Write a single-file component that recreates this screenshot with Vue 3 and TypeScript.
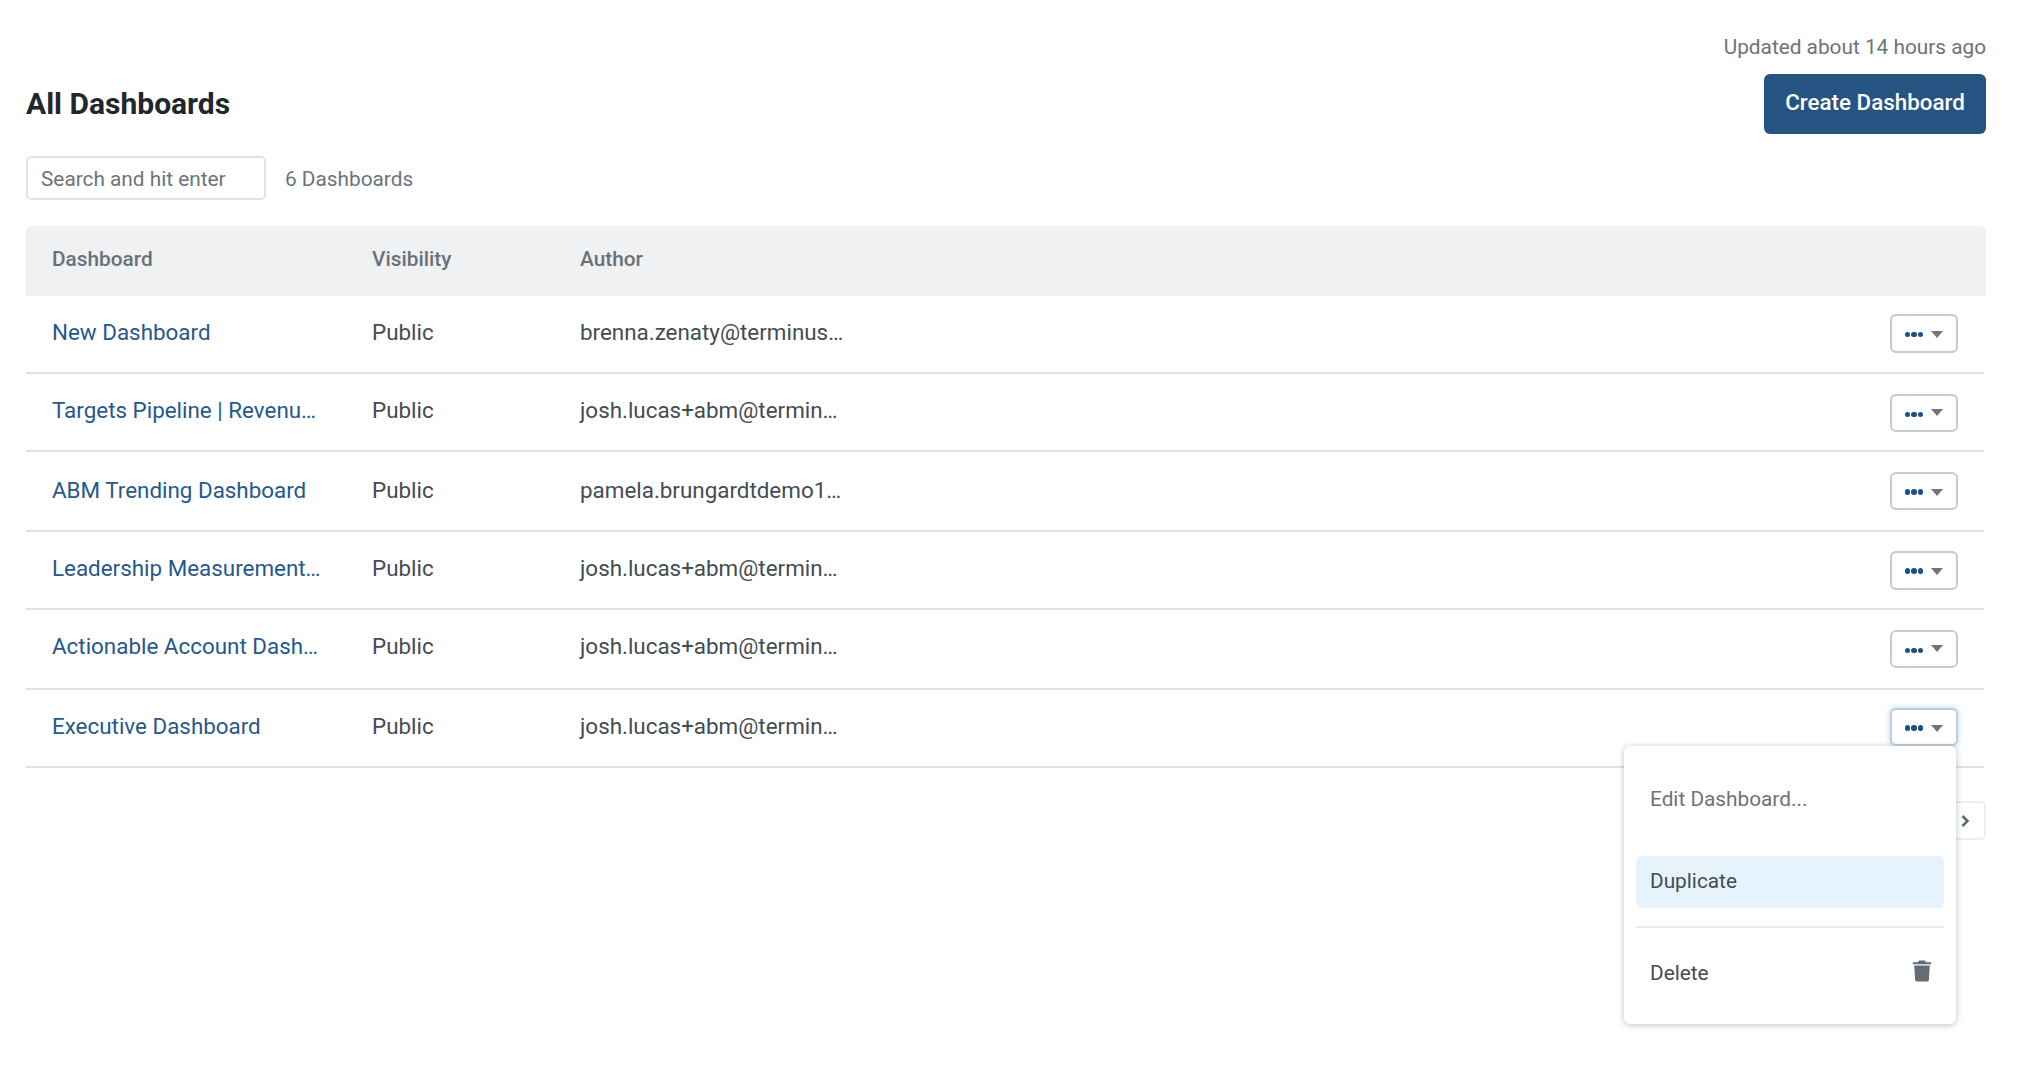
<script setup lang="ts">
interface Row { name: string; author: string; h: number; bh: number; bm: number; text: number; lift?: boolean; active?: boolean }
const rows: Row[] = [
  { name: 'New Dashboard', author: 'brenna.zenaty@terminus…', h: 78, bh: 39, bm: -1, text: 4 },
  { name: 'Targets Pipeline | Revenu…', author: 'josh.lucas+abm@termin…', h: 78, bh: 38, bm: 2, text: 4, lift: true },
  { name: 'ABM Trending Dashboard', author: 'pamela.brungardtdemo1…', h: 80, bh: 38, bm: 0, text: 2 },
  { name: 'Leadership Measurement…', author: 'josh.lucas+abm@termin…', h: 78, bh: 39, bm: 0, text: 4 },
  { name: 'Actionable Account Dash…', author: 'josh.lucas+abm@termin…', h: 80, bh: 38, bm: 0, text: 6, lift: true },
  { name: 'Executive Dashboard', author: 'josh.lucas+abm@termin…', h: 78, bh: 38, bm: -2, text: 4, active: true },
]
</script>

<template>
  <div class="page">
    <div class="updated">Updated about 14 hours ago</div>
    <header class="head">
      <h1>All Dashboards</h1>
      <button class="create"><span>Create Dashboard</span></button>
    </header>
    <div class="tools">
      <div class="search">Search and hit enter</div>
      <span class="count">6 Dashboards</span>
    </div>
    <div class="table">
      <div class="row thead">
        <div class="c1">Dashboard</div>
        <div class="c2">Visibility</div>
        <div class="c3">Author</div>
      </div>
      <div v-for="r in rows" :key="r.name" class="row body" :style="{ height: r.h + 'px' }">
        <a class="c1 link" :style="{ paddingBottom: r.text + 'px' }">{{ r.name }}</a>
        <div class="c2" :style="{ paddingBottom: r.text + 'px' }">Public</div>
        <div class="c3" :style="{ paddingBottom: r.text + 'px' }">{{ r.author }}</div>
        <div class="actions">
          <button
            class="more"
            :class="{ active: r.active, lift: r.lift }"
            :style="{ height: r.bh + 'px', marginTop: r.bm + 'px' }"
          >
            <span class="dots"><i></i><i></i><i></i></span>
            <span class="caret"></span>
          </button>
          <div v-if="r.active" class="menu">
            <div class="item edit">Edit Dashboard...</div>
            <div class="item dup">Duplicate</div>
            <div class="sep"></div>
            <div class="item del">
              <span>Delete</span>
              <svg width="20" height="22" viewBox="0 0 20 22" class="trash">
                <path fill="#646d74" d="M7 0.5h6l1 1.8h5.2v1.9H.8V2.3H6zM2.2 5.4h15.6l-.9 14.4c-.1 1-.8 1.7-1.8 1.7H4.9c-1 0-1.7-.7-1.8-1.7z" />
              </svg>
            </div>
          </div>
        </div>
      </div>
    </div>
    <div class="pager">
      <button class="next">
        <svg width="10" height="14" viewBox="0 0 10 14"><path d="M2.5 2l5 5-5 5" fill="none" stroke="#5f6b75" stroke-width="2.6" /></svg>
      </button>
    </div>
  </div>
</template>

<style>
html, body { margin: 0; background: #fff; }
</style>

<style scoped>
.page {
  width: 2024px;
  height: 1074px;
  box-sizing: border-box;
  padding: 34px 38px 0 26px;
  font-family: Roboto, "Liberation Sans", sans-serif;
  font-size: 22.4px;
  color: #444c53;
  overflow: hidden;
}
.updated { text-align: right; color: #6c747b; font-size: 20.8px; line-height: 26px; }
.head { display: flex; justify-content: space-between; align-items: center; margin-top: 14px; height: 60px; }
h1 { margin: 0 0 2px; font-size: 30px; font-weight: 700; color: #20272d; }
.create {
  width: 222px; height: 60px; border: 0; border-radius: 6px; background: #255382; color: #fff;
  font: 500 22.4px Roboto, sans-serif; padding: 0 0 5px; margin: 0;
}
.tools { display: flex; align-items: center; margin-top: 22px; gap: 20px; }
.search {
  width: 240px; height: 44px; box-sizing: border-box; border: 2px solid #dfe3e7; border-radius: 5px;
  padding: 1px 0 0 13px; display: flex; align-items: center; color: #6c747b; font-size: 20.8px;
}
.count { color: #6c747b; font-size: 20.8px; padding-top: 2px; margin-left: -1px; }
.table { margin-top: 26px; }
.row { display: flex; align-items: center; box-sizing: border-box; padding-left: 26px; }
.thead {
  height: 70px; background: #f0f1f3; border-radius: 6px 6px 0 0; color: #697178; font-weight: 500; font-size: 20.8px;
}
.thead > div { padding-bottom: 4px; }
.body { border-bottom: 2px solid #dfe1e4; margin-right: 2px; position: relative; }
.c1 { width: 320px; flex: none; }
.c2 { width: 208px; flex: none; }
.c3 { flex: 1; }
.link { color: #27588c; }
.actions { flex: none; margin-right: 26px; position: relative; }
.more {
  width: 68px; box-sizing: border-box; padding: 0; background: #fff; border: 2px solid #c5cbd1; border-radius: 6px;
  display: flex; align-items: center; justify-content: center; gap: 8px;
}
.more.active { box-shadow: 0 0 4px 2px #d3e8fa; }
.dots { display: flex; gap: 1px; margin-top: 2px; }
.dots i { width: 5.6px; height: 5.6px; border-radius: 50%; background: #1f5085; display: block; }
.caret {
  width: 0; height: 0; margin-top: 2px;
  border-left: 6px solid transparent; border-right: 6px solid transparent; border-top: 7px solid #70767c;
}
.lift .dots { margin-top: 3px; }
.lift .caret { margin-top: -1px; }
.menu {
  position: absolute; right: 2px; top: 36px; width: 332px; height: 278px; box-sizing: border-box;
  background: #fff; border-radius: 6px; box-shadow: 0 1px 6px rgba(60, 70, 80, .35); padding: 0 12px; z-index: 2;
}
.item { font-size: 20.8px; padding-left: 14px; display: flex; align-items: center; border-radius: 6px; }
.edit { height: 52px; margin-top: 27px; color: #6c747b; }
.dup { height: 52px; margin-top: 31px; background: #e6f2fc; padding-bottom: 2px; box-sizing: border-box; }
.sep { height: 2px; background: #e8eaec; margin-top: 18px; }
.del { height: 52px; margin-top: 19px; justify-content: space-between; padding-right: 12px; }
.trash { margin-top: -5px; }
.pager { display: flex; justify-content: flex-end; margin-top: 33px; }
.next {
  width: 60px; height: 39px; padding: 0 0 0 17px; background: #fff; border: 2px solid #eceef0; border-radius: 5px;
  display: flex; align-items: center; justify-content: center;
}
</style>
